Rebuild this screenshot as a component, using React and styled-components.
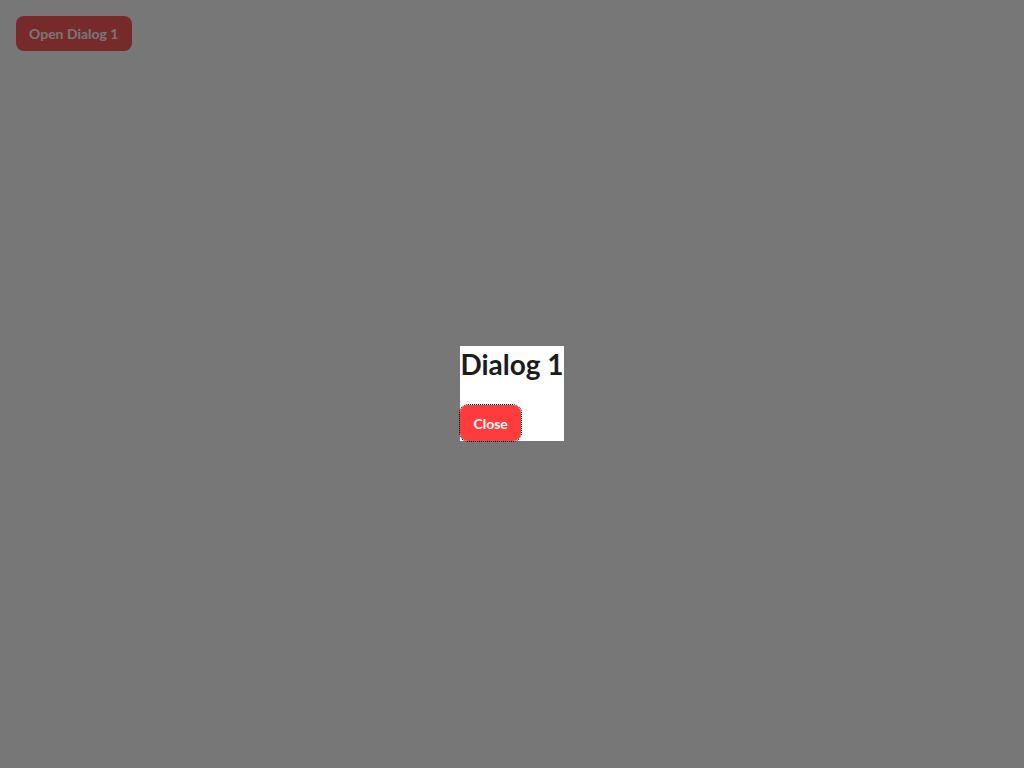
import React from "react";
import styled, { createGlobalStyle } from "styled-components";

const GlobalStyle = createGlobalStyle`
  html, body { margin: 0; padding: 0; background: #ffffff; }
  body { font-family: Lato, "Open Sans", sans-serif; }
`;

const Page = styled.div`
  padding: 16px;
`;

const Button = styled.button`
  font-family: Lato, "Open Sans", sans-serif;
  font-size: 14px;
  font-weight: 700;
  color: #ffffff;
  background: ${(p) => p.$bg};
  border: none;
  border-radius: 8px;
  height: ${(p) => p.$h}px;
  padding: 0 ${(p) => p.$px}px;
  cursor: pointer;
  outline: ${(p) => (p.$focused ? "1px dotted #000" : "none")};
  outline-offset: 0;
`;

const Overlay = styled.div`
  position: fixed;
  inset: 0;
  background: rgba(0, 0, 0, 0.533);
  display: flex;
  align-items: center;
  justify-content: center;
  padding-top: 19px;
`;

const Dialog = styled.div`
  background: #ffffff;
  display: flex;
  flex-direction: column;
  align-items: flex-start;
  height: 95px;
`;

const Title = styled.h2`
  margin: 0 0 23px;
  font-family: Lato, "Open Sans", sans-serif;
  font-size: 28px;
  font-weight: 700;
  line-height: 36px;
  color: #1c1c1c;
`;

export default function App() {
  return (
    <>
      <GlobalStyle />
      <Page>
        <Button $h={35} $px={13} $bg="#ff5a5a">Open Dialog 1</Button>
      </Page>
      <Overlay>
        <Dialog>
          <Title>Dialog 1</Title>
          <Button $h={36} $px={13} $bg="#ff3b3b" $focused>Close</Button>
        </Dialog>
      </Overlay>
    </>
  );
}
